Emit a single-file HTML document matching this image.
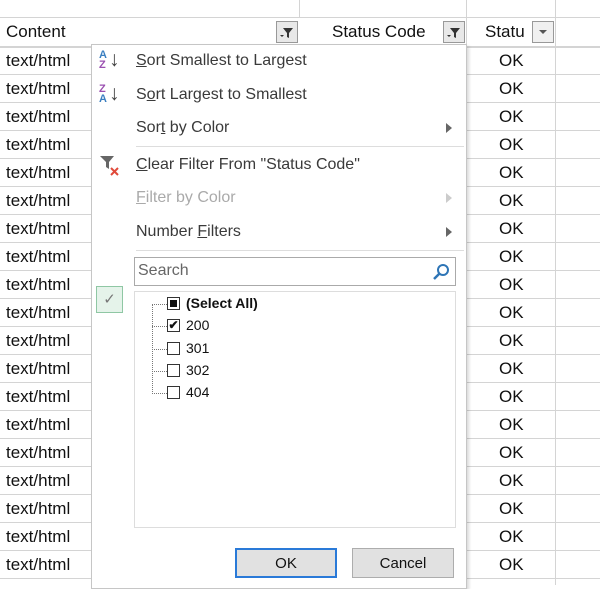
<!DOCTYPE html>
<html><head><style>
*{margin:0;padding:0;box-sizing:border-box}
body{width:600px;height:585px;overflow:hidden;background:#fff;font-family:"Liberation Sans",sans-serif;position:relative;color:#111}
.a{position:absolute}
.h{position:absolute;left:0;width:600px;height:1px;background:#d4d4d4}
.v{position:absolute;top:0;width:1px;height:585px;background:#d4d4d4}
.cell{position:absolute;font-size:17px}
.mi{position:absolute;left:136px;font-size:16px;color:#3a3a3a}
.dis{color:#aaa}
.cb{position:absolute;left:167px;width:13px;height:13px;border:1px solid #333;background:#fff}
.lbl{position:absolute;left:186px;font-size:14px;color:#111}
</style></head><body>
<div class="h" style="top:17px"></div>
<div class="h" style="top:46px;height:2px"></div>
<div class="v" style="left:299px;height:18px"></div>
<div class="v" style="left:466px"></div>
<div class="v" style="left:555px"></div>
<div class="cell" style="left:6px;top:22px">Content</div>
<div class="a" style="left:276px;top:21px;width:22px;height:22px;border:1px solid #999;background:#e8e8e8"><svg width="20" height="20"><path d="M6 6h10l-4 5v5l-2-1v-4z" fill="#333"/><path d="M3 13h4l-2 2z" fill="#333"/></svg></div>
<div class="cell" style="left:332px;top:22px">Status Code</div>
<div class="a" style="left:443px;top:21px;width:22px;height:22px;border:1px solid #999;background:#e8e8e8"><svg width="20" height="20"><path d="M6 6h10l-4 5v5l-2-1v-4z" fill="#333"/><path d="M3 13h4l-2 2z" fill="#333"/></svg></div>
<div class="cell" style="left:485px;top:22px">Statu</div>
<div class="a" style="left:532px;top:21px;width:22px;height:22px;border:1px solid #999;background:#f0f0f0"><svg width="20" height="20"><path d="M6 8h8l-4 4z" fill="#555"/></svg></div>
<div id="rows"></div>
<script>
var r='';for(var i=0;i<19;i++){var y=48+i*28;r+='<div class="h" style="top:'+(y+26)+'px"></div><div class="cell" style="left:6px;top:'+(y+3)+'px">text/html</div><div class="cell" style="left:499px;top:'+(y+3)+'px">OK</div>';}
document.getElementById('rows').innerHTML=r;
</script>
<div class="a" style="left:91px;top:44px;width:376px;height:545px;background:#fff;border:1px solid #c6c6c6;box-shadow:2px 2px 3px rgba(0,0,0,.15)"></div>
<div class="a" style="left:99px;top:50px;font-size:11px;line-height:10px;font-weight:bold"><span style="color:#3a7fc1">A</span><br><span style="color:#9a4fb0">Z</span></div>
<div class="a" style="left:109px;top:48px;font-size:21px;color:#444">↓</div>
<div class="a" style="left:99px;top:84px;font-size:11px;line-height:10px;font-weight:bold"><span style="color:#9a4fb0">Z</span><br><span style="color:#3a7fc1">A</span></div>
<div class="a" style="left:109px;top:82px;font-size:21px;color:#444">↓</div>
<div class="mi" style="top:52px"><u>S</u>ort Smallest to Largest</div>
<div class="mi" style="top:86px">S<u>o</u>rt Largest to Smallest</div>
<div class="mi" style="top:119px">Sor<u>t</u> by Color</div>
<div class="a" style="left:446px;top:123px;border-left:6px solid #666;border-top:5px solid transparent;border-bottom:5px solid transparent"></div>
<div class="a" style="left:136px;top:146px;width:328px;height:1px;background:#ddd"></div>
<svg class="a" style="left:99px;top:154px" width="24" height="24"><path d="M1 2h14l-5 6v7l-3-2v-5z" fill="#666"/><path d="M12 14l7 7M19 14l-7 7" stroke="#e04a3a" stroke-width="2"/></svg>
<div class="mi" style="top:156px"><u>C</u>lear Filter From "Status Code"</div>
<div class="mi dis" style="top:189px"><u>F</u>ilter by Color</div>
<div class="a" style="left:446px;top:193px;border-left:6px solid #ccc;border-top:5px solid transparent;border-bottom:5px solid transparent"></div>
<div class="mi" style="top:223px">Number <u>F</u>ilters</div>
<div class="a" style="left:446px;top:227px;border-left:6px solid #666;border-top:5px solid transparent;border-bottom:5px solid transparent"></div>
<div class="a" style="left:136px;top:250px;width:328px;height:1px;background:#ddd"></div>
<div class="a" style="left:134px;top:257px;width:322px;height:29px;border:1px solid #aaa"></div>
<div class="a" style="left:138px;top:262px;font-size:16px;color:#666">Search</div>
<svg class="a" style="left:432px;top:262px" width="20" height="20"><circle cx="11" cy="8" r="5" fill="none" stroke="#2e75b6" stroke-width="2"/><path d="M7 12l-5 5" stroke="#2e75b6" stroke-width="2.5"/></svg>
<div class="a" style="left:96px;top:286px;width:27px;height:27px;border:1px solid #8fc7a4;background:#e5f3ea;color:#777;font-size:15px;text-align:center;line-height:25px">✓</div>
<div class="a" style="left:134px;top:291px;width:322px;height:237px;border:1px solid #ddd"></div>
<div class="a" style="left:152px;top:304px;width:1px;height:90px;border-left:1px dotted #777"></div>
<div class="a" style="left:152px;top:304px;width:15px;height:1px;border-top:1px dotted #777"></div>
<div class="a" style="left:152px;top:326px;width:15px;height:1px;border-top:1px dotted #777"></div>
<div class="a" style="left:152px;top:349px;width:15px;height:1px;border-top:1px dotted #777"></div>
<div class="a" style="left:152px;top:371px;width:15px;height:1px;border-top:1px dotted #777"></div>
<div class="a" style="left:152px;top:393px;width:15px;height:1px;border-top:1px dotted #777"></div>
<div class="cb" style="top:297px"><div style="margin:2px;width:7px;height:7px;background:#111"></div></div>
<div class="lbl" style="top:295px;font-weight:bold">(Select All)</div>
<div class="cb" style="top:319px;font-size:12px;line-height:11px;text-align:center;font-weight:bold">✔</div>
<div class="lbl" style="top:317px">200</div>
<div class="cb" style="top:342px"></div><div class="lbl" style="top:340px">301</div>
<div class="cb" style="top:364px"></div><div class="lbl" style="top:362px">302</div>
<div class="cb" style="top:386px"></div><div class="lbl" style="top:384px">404</div>
<div class="a" style="left:235px;top:548px;width:102px;height:30px;border:2px solid #2a7ad8;background:#e1e1e1;font-size:15px;text-align:center;line-height:28px">OK</div>
<div class="a" style="left:352px;top:548px;width:102px;height:30px;border:1px solid #adadad;background:#e1e1e1;font-size:15px;text-align:center;line-height:30px">Cancel</div>
</body></html>
